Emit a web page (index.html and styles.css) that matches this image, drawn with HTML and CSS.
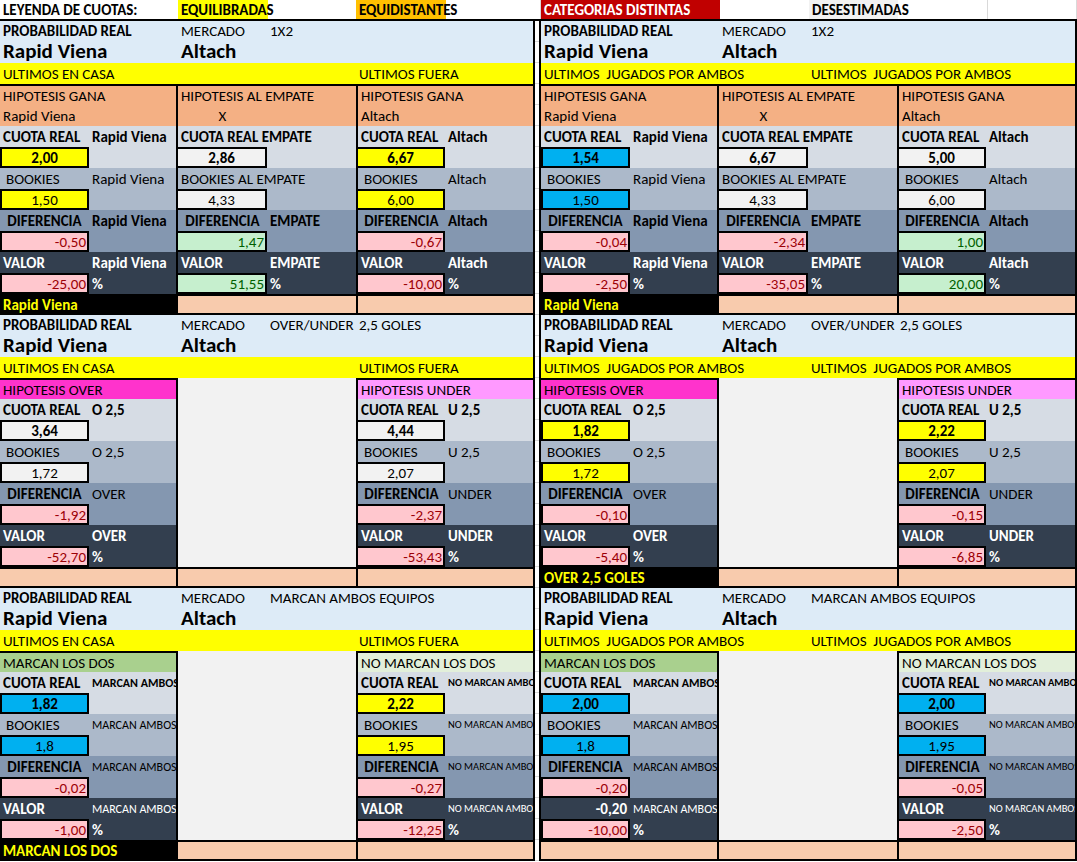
FILE: index.html
```html
<!DOCTYPE html>
<html lang="es">
<head>
<meta charset="utf-8">
<title>Leyenda de cuotas</title>
<link rel="stylesheet" href="styles.css">
</head>
<body>
<div class="legend">
  <span class="lg w178 b">LEYENDA DE CUOTAS:</span>
  <span class="lg w90 b ylw">EQUILIBRADAS</span>
  <span class="lg w88"></span>
  <span class="lg w90 b org">EQUIDISTANTES</span>
  <span class="lg w95 gl"></span>
  <span class="lg w179 b red">CATEGORIAS DISTINTAS</span>
  <span class="lg w89"></span>
  <span class="lg w89 b lgr">DESESTIMADAS</span>
  <span class="lg w90 gl"></span>
  <span class="lg fl gl"></span>
</div>

<div class="sheet">
  <!-- LEFT HALF -->
  <div class="half left">
    <!-- BLOCK 1X2 -->
    <div class="hdr">
      <div class="hrow"><span class="w178 b">PROBABILIDAD REAL</span><span class="w89">MERCADO</span><span class="w89">1X2</span></div>
      <div class="hrow big"><span class="w178">Rapid Viena</span><span class="w89">Altach</span></div>
    </div>
    <div class="row yel"><span class="w356">ULTIMOS EN CASA</span><span class="fl">ULTIMOS FUERA</span></div>
    <div class="grps">
      <div class="grp g1">
        <div class="row hip tb"><span class="fl">HIPOTESIS GANA</span></div>
        <div class="row hip"><span class="fl">Rapid Viena</span></div>
        <div class="row l1 b"><span class="a">CUOTA REAL</span><span class="z">Rapid Viena</span></div>
        <div class="row l1"><span class="a box yb b">2,00</span><span class="z"></span></div>
        <div class="row l2"><span class="a sp">BOOKIES</span><span class="z">Rapid Viena</span></div>
        <div class="row l2"><span class="a box yb">1,50</span><span class="z"></span></div>
        <div class="row l3 b"><span class="a ctr">DIFERENCIA</span><span class="z">Rapid Viena</span></div>
        <div class="row l3"><span class="a box neg">-0,50</span><span class="z"></span></div>
        <div class="row l4 b"><span class="a">VALOR</span><span class="z">Rapid Viena</span></div>
        <div class="row l4"><span class="a box neg">-25,00</span><span class="z b">%</span></div>
        <div class="row res blk"><span class="fl">Rapid Viena</span></div>
      </div>
      <div class="grp g2">
        <div class="row hip tb"><span class="fl">HIPOTESIS AL EMPATE</span></div>
        <div class="row hip"><span class="a ctr">X</span><span class="z"></span></div>
        <div class="row l1 b"><span class="fl">CUOTA REAL EMPATE</span></div>
        <div class="row l1"><span class="a box wb b nl">2,86</span><span class="z"></span></div>
        <div class="row l2"><span class="fl">BOOKIES AL EMPATE</span></div>
        <div class="row l2"><span class="a box wb nl">4,33</span><span class="z"></span></div>
        <div class="row l3 b"><span class="a ctr">DIFERENCIA</span><span class="z">EMPATE</span></div>
        <div class="row l3"><span class="a box pos nl">1,47</span><span class="z"></span></div>
        <div class="row l4 b"><span class="a">VALOR</span><span class="z">EMPATE</span></div>
        <div class="row l4"><span class="a box pos nl">51,55</span><span class="z b">%</span></div>
        <div class="row res"><span class="fl"></span></div>
      </div>
      <div class="grp g3">
        <div class="row hip tb"><span class="fl">HIPOTESIS GANA</span></div>
        <div class="row hip"><span class="fl">Altach</span></div>
        <div class="row l1 b"><span class="a">CUOTA REAL</span><span class="z">Altach</span></div>
        <div class="row l1"><span class="a box yb b nl">6,67</span><span class="z"></span></div>
        <div class="row l2"><span class="a sp">BOOKIES</span><span class="z">Altach</span></div>
        <div class="row l2"><span class="a box yb nl">6,00</span><span class="z"></span></div>
        <div class="row l3 b"><span class="a ctr">DIFERENCIA</span><span class="z">Altach</span></div>
        <div class="row l3"><span class="a box neg nl">-0,67</span><span class="z"></span></div>
        <div class="row l4 b"><span class="a">VALOR</span><span class="z">Altach</span></div>
        <div class="row l4"><span class="a box neg nl">-10,00</span><span class="z b">%</span></div>
        <div class="row res"><span class="fl"></span></div>
      </div>
    </div>

    <!-- BLOCK OVER/UNDER -->
    <div class="hdr">
      <div class="hrow"><span class="w178 b">PROBABILIDAD REAL</span><span class="w89">MERCADO</span><span class="w89">OVER/UNDER</span><span class="w89">2,5 GOLES</span></div>
      <div class="hrow big"><span class="w178">Rapid Viena</span><span class="w89">Altach</span></div>
    </div>
    <div class="row yel"><span class="w356">ULTIMOS EN CASA</span><span class="fl">ULTIMOS FUERA</span></div>
    <div class="grps">
      <div class="grp g1">
        <div class="row ov tb"><span class="fl">HIPOTESIS OVER</span></div>
        <div class="row l1 b"><span class="a">CUOTA REAL</span><span class="z">O 2,5</span></div>
        <div class="row l1"><span class="a box wb b">3,64</span><span class="z"></span></div>
        <div class="row l2"><span class="a sp">BOOKIES</span><span class="z">O 2,5</span></div>
        <div class="row l2"><span class="a box wb">1,72</span><span class="z"></span></div>
        <div class="row l3"><span class="a ctr b">DIFERENCIA</span><span class="z">OVER</span></div>
        <div class="row l3"><span class="a box neg">-1,92</span><span class="z"></span></div>
        <div class="row l4 b"><span class="a">VALOR</span><span class="z">OVER</span></div>
        <div class="row l4"><span class="a box neg">-52,70</span><span class="z b">%</span></div>
        <div class="row res"><span class="fl"></span></div>
      </div>
      <div class="grp g2">
        <div class="gray"></div>
        <div class="row res"><span class="fl"></span></div>
      </div>
      <div class="grp g3">
        <div class="row un tb"><span class="fl">HIPOTESIS UNDER</span></div>
        <div class="row l1 b"><span class="a">CUOTA REAL</span><span class="z">U 2,5</span></div>
        <div class="row l1"><span class="a box wb b nl">4,44</span><span class="z"></span></div>
        <div class="row l2"><span class="a sp">BOOKIES</span><span class="z">U 2,5</span></div>
        <div class="row l2"><span class="a box wb nl">2,07</span><span class="z"></span></div>
        <div class="row l3"><span class="a ctr b">DIFERENCIA</span><span class="z">UNDER</span></div>
        <div class="row l3"><span class="a box neg nl">-2,37</span><span class="z"></span></div>
        <div class="row l4 b"><span class="a">VALOR</span><span class="z">UNDER</span></div>
        <div class="row l4"><span class="a box neg nl">-53,43</span><span class="z b">%</span></div>
        <div class="row res"><span class="fl"></span></div>
      </div>
    </div>

    <!-- BLOCK MARCAN AMBOS -->
    <div class="hdr">
      <div class="hrow"><span class="w178 b">PROBABILIDAD REAL</span><span class="w89">MERCADO</span><span class="fl">MARCAN AMBOS EQUIPOS</span></div>
      <div class="hrow big"><span class="w178">Rapid Viena</span><span class="w89">Altach</span></div>
    </div>
    <div class="row yel"><span class="w356">ULTIMOS EN CASA</span><span class="fl">ULTIMOS FUERA</span></div>
    <div class="grps">
      <div class="grp g1">
        <div class="row mg tb"><span class="fl">MARCAN LOS DOS</span></div>
        <div class="row l1 b"><span class="a">CUOTA REAL</span><span class="z sm">MARCAN AMBOS</span></div>
        <div class="row l1"><span class="a box bb b">1,82</span><span class="z"></span></div>
        <div class="row l2"><span class="a sp">BOOKIES</span><span class="z sm">MARCAN AMBOS</span></div>
        <div class="row l2"><span class="a box bb">1,8</span><span class="z"></span></div>
        <div class="row l3"><span class="a ctr b">DIFERENCIA</span><span class="z sm">MARCAN AMBOS</span></div>
        <div class="row l3"><span class="a box neg">-0,02</span><span class="z"></span></div>
        <div class="row l4"><span class="a b">VALOR</span><span class="z sm">MARCAN AMBOS</span></div>
        <div class="row l4"><span class="a box neg">-1,00</span><span class="z b">%</span></div>
        <div class="row res blk"><span class="fl">MARCAN LOS DOS</span></div>
      </div>
      <div class="grp g2">
        <div class="gray"></div>
        <div class="row res"><span class="fl"></span></div>
      </div>
      <div class="grp g3">
        <div class="row nm tb"><span class="fl">NO MARCAN LOS DOS</span></div>
        <div class="row l1 b"><span class="a">CUOTA REAL</span><span class="z xs">NO MARCAN AMBOS</span></div>
        <div class="row l1"><span class="a box yb b nl">2,22</span><span class="z"></span></div>
        <div class="row l2"><span class="a sp">BOOKIES</span><span class="z xs">NO MARCAN AMBOS</span></div>
        <div class="row l2"><span class="a box yb nl">1,95</span><span class="z"></span></div>
        <div class="row l3"><span class="a ctr b">DIFERENCIA</span><span class="z xs">NO MARCAN AMBOS</span></div>
        <div class="row l3"><span class="a box neg nl">-0,27</span><span class="z"></span></div>
        <div class="row l4"><span class="a b">VALOR</span><span class="z xs">NO MARCAN AMBOS</span></div>
        <div class="row l4"><span class="a box neg nl">-12,25</span><span class="z b">%</span></div>
        <div class="row res"><span class="fl"></span></div>
      </div>
    </div>
  </div>

  <div class="sep"></div>

  <!-- RIGHT HALF -->
  <div class="half right">
    <div class="hdr">
      <div class="hrow"><span class="w178 b">PROBABILIDAD REAL</span><span class="w89">MERCADO</span><span class="w89">1X2</span></div>
      <div class="hrow big"><span class="w178">Rapid Viena</span><span class="w89">Altach</span></div>
    </div>
    <div class="row yel"><span class="w267">ULTIMOS &nbsp;JUGADOS POR AMBOS</span><span class="fl">ULTIMOS &nbsp;JUGADOS POR AMBOS</span></div>
    <div class="grps">
      <div class="grp g1">
        <div class="row hip tb"><span class="fl">HIPOTESIS GANA</span></div>
        <div class="row hip"><span class="fl">Rapid Viena</span></div>
        <div class="row l1 b"><span class="a">CUOTA REAL</span><span class="z">Rapid Viena</span></div>
        <div class="row l1"><span class="a box bb b">1,54</span><span class="z"></span></div>
        <div class="row l2"><span class="a sp">BOOKIES</span><span class="z">Rapid Viena</span></div>
        <div class="row l2"><span class="a box bb">1,50</span><span class="z"></span></div>
        <div class="row l3 b"><span class="a ctr">DIFERENCIA</span><span class="z">Rapid Viena</span></div>
        <div class="row l3"><span class="a box neg">-0,04</span><span class="z"></span></div>
        <div class="row l4 b"><span class="a">VALOR</span><span class="z">Rapid Viena</span></div>
        <div class="row l4"><span class="a box neg">-2,50</span><span class="z b">%</span></div>
        <div class="row res blk"><span class="fl">Rapid Viena</span></div>
      </div>
      <div class="grp g2">
        <div class="row hip tb"><span class="fl">HIPOTESIS AL EMPATE</span></div>
        <div class="row hip"><span class="a ctr">X</span><span class="z"></span></div>
        <div class="row l1 b"><span class="fl">CUOTA REAL EMPATE</span></div>
        <div class="row l1"><span class="a box wb b nl">6,67</span><span class="z"></span></div>
        <div class="row l2"><span class="fl">BOOKIES AL EMPATE</span></div>
        <div class="row l2"><span class="a box wb nl">4,33</span><span class="z"></span></div>
        <div class="row l3 b"><span class="a ctr">DIFERENCIA</span><span class="z">EMPATE</span></div>
        <div class="row l3"><span class="a box neg nl">-2,34</span><span class="z"></span></div>
        <div class="row l4 b"><span class="a">VALOR</span><span class="z">EMPATE</span></div>
        <div class="row l4"><span class="a box neg nl">-35,05</span><span class="z b">%</span></div>
        <div class="row res"><span class="fl"></span></div>
      </div>
      <div class="grp g3">
        <div class="row hip tb"><span class="fl">HIPOTESIS GANA</span></div>
        <div class="row hip"><span class="fl">Altach</span></div>
        <div class="row l1 b"><span class="a">CUOTA REAL</span><span class="z">Altach</span></div>
        <div class="row l1"><span class="a box wb b nl">5,00</span><span class="z"></span></div>
        <div class="row l2"><span class="a sp">BOOKIES</span><span class="z">Altach</span></div>
        <div class="row l2"><span class="a box wb nl">6,00</span><span class="z"></span></div>
        <div class="row l3 b"><span class="a ctr">DIFERENCIA</span><span class="z">Altach</span></div>
        <div class="row l3"><span class="a box pos nl">1,00</span><span class="z"></span></div>
        <div class="row l4 b"><span class="a">VALOR</span><span class="z">Altach</span></div>
        <div class="row l4"><span class="a box pos nl">20,00</span><span class="z b">%</span></div>
        <div class="row res"><span class="fl"></span></div>
      </div>
    </div>

    <div class="hdr">
      <div class="hrow"><span class="w178 b">PROBABILIDAD REAL</span><span class="w89">MERCADO</span><span class="w89">OVER/UNDER</span><span class="w89">2,5 GOLES</span></div>
      <div class="hrow big"><span class="w178">Rapid Viena</span><span class="w89">Altach</span></div>
    </div>
    <div class="row yel"><span class="w267">ULTIMOS &nbsp;JUGADOS POR AMBOS</span><span class="fl">ULTIMOS &nbsp;JUGADOS POR AMBOS</span></div>
    <div class="grps">
      <div class="grp g1">
        <div class="row ov tb"><span class="fl">HIPOTESIS OVER</span></div>
        <div class="row l1 b"><span class="a">CUOTA REAL</span><span class="z">O 2,5</span></div>
        <div class="row l1"><span class="a box yb b">1,82</span><span class="z"></span></div>
        <div class="row l2"><span class="a sp">BOOKIES</span><span class="z">O 2,5</span></div>
        <div class="row l2"><span class="a box yb">1,72</span><span class="z"></span></div>
        <div class="row l3"><span class="a ctr b">DIFERENCIA</span><span class="z">OVER</span></div>
        <div class="row l3"><span class="a box neg">-0,10</span><span class="z"></span></div>
        <div class="row l4 b"><span class="a">VALOR</span><span class="z">OVER</span></div>
        <div class="row l4"><span class="a box neg">-5,40</span><span class="z b">%</span></div>
        <div class="row res blk"><span class="fl">OVER 2,5 GOLES</span></div>
      </div>
      <div class="grp g2">
        <div class="gray"></div>
        <div class="row res"><span class="fl"></span></div>
      </div>
      <div class="grp g3">
        <div class="row un tb"><span class="fl">HIPOTESIS UNDER</span></div>
        <div class="row l1 b"><span class="a">CUOTA REAL</span><span class="z">U 2,5</span></div>
        <div class="row l1"><span class="a box yb b nl">2,22</span><span class="z"></span></div>
        <div class="row l2"><span class="a sp">BOOKIES</span><span class="z">U 2,5</span></div>
        <div class="row l2"><span class="a box yb nl">2,07</span><span class="z"></span></div>
        <div class="row l3"><span class="a ctr b">DIFERENCIA</span><span class="z">UNDER</span></div>
        <div class="row l3"><span class="a box neg nl">-0,15</span><span class="z"></span></div>
        <div class="row l4 b"><span class="a">VALOR</span><span class="z">UNDER</span></div>
        <div class="row l4"><span class="a box neg nl">-6,85</span><span class="z b">%</span></div>
        <div class="row res"><span class="fl"></span></div>
      </div>
    </div>

    <div class="hdr">
      <div class="hrow"><span class="w178 b">PROBABILIDAD REAL</span><span class="w89">MERCADO</span><span class="fl">MARCAN AMBOS EQUIPOS</span></div>
      <div class="hrow big"><span class="w178">Rapid Viena</span><span class="w89">Altach</span></div>
    </div>
    <div class="row yel"><span class="w267">ULTIMOS &nbsp;JUGADOS POR AMBOS</span><span class="fl">ULTIMOS &nbsp;JUGADOS POR AMBOS</span></div>
    <div class="grps">
      <div class="grp g1">
        <div class="row mg tb"><span class="fl">MARCAN LOS DOS</span></div>
        <div class="row l1 b"><span class="a">CUOTA REAL</span><span class="z sm">MARCAN AMBOS</span></div>
        <div class="row l1"><span class="a box bb b">2,00</span><span class="z"></span></div>
        <div class="row l2"><span class="a sp">BOOKIES</span><span class="z sm">MARCAN AMBOS</span></div>
        <div class="row l2"><span class="a box bb">1,8</span><span class="z"></span></div>
        <div class="row l3"><span class="a ctr b">DIFERENCIA</span><span class="z sm">MARCAN AMBOS</span></div>
        <div class="row l3"><span class="a box neg">-0,20</span><span class="z"></span></div>
        <div class="row l4"><span class="a b rt">-0,20</span><span class="z sm">MARCAN AMBOS</span></div>
        <div class="row l4"><span class="a box neg">-10,00</span><span class="z b">%</span></div>
        <div class="row res"><span class="fl"></span></div>
      </div>
      <div class="grp g2">
        <div class="gray"></div>
        <div class="row res"><span class="fl"></span></div>
      </div>
      <div class="grp g3">
        <div class="row nm tb"><span class="fl">NO MARCAN LOS DOS</span></div>
        <div class="row l1 b"><span class="a">CUOTA REAL</span><span class="z xs">NO MARCAN AMBOS</span></div>
        <div class="row l1"><span class="a box bb b nl">2,00</span><span class="z"></span></div>
        <div class="row l2"><span class="a sp">BOOKIES</span><span class="z xs">NO MARCAN AMBOS</span></div>
        <div class="row l2"><span class="a box bb nl">1,95</span><span class="z"></span></div>
        <div class="row l3"><span class="a ctr b">DIFERENCIA</span><span class="z xs">NO MARCAN AMBOS</span></div>
        <div class="row l3"><span class="a box neg nl">-0,05</span><span class="z"></span></div>
        <div class="row l4"><span class="a b">VALOR</span><span class="z xs">NO MARCAN AMBOS</span></div>
        <div class="row l4"><span class="a box neg nl">-2,50</span><span class="z b">%</span></div>
        <div class="row res"><span class="fl"></span></div>
      </div>
    </div>
  </div>
</div>
</body>
</html>
```

FILE: styles.css
```css
* { box-sizing: border-box; }

body {
  margin: 0;
  width: 1077px;
  height: 862px;
  overflow: hidden;
  background: #ffffff;
  color: #000000;
  font-family: Carlito, Lato, "Liberation Sans", sans-serif;
  font-size: 15px;
}

.b { font-weight: 700; }

/* legend row */
.legend {
  display: flex;
  height: 21px;
  border-bottom: 2px solid #000;
  white-space: nowrap;
  line-height: 21px;
}
.lg { display: block; flex: none; padding-left: 3px; overflow: visible; }
.w178 { width: 178px; }
.w179 { width: 179px; }
.w90 { width: 90px; }
.w88 { width: 88px; }
.w89 { width: 89px; }
.w95 { width: 95px; }
.w267 { width: 267px; }
.w356 { width: 356px; }
.fl { flex: 1 1 0; min-width: 0; }
.ylw { background: #ffff00; }
.org { background: #ffc000; }
.red { background: #c00000; color: #ffffff; }
.lgr { background: #f2f2f2; }
.gl { border-right: 1px solid #d9d9d9; }

/* sheet */
.sheet { display: flex; }
.half { display: flex; flex-direction: column; flex: none; }
.half.left { width: 535px; border-right: 2px solid #000; }
.half.right { width: 538px; border-left: 2px solid #000; border-right: 2px solid #000; }
.sep {
  flex: none;
  width: 4px;
  background: repeating-linear-gradient(to bottom, #ffffff 0 20px, #d9d9d9 20px 21px);
}

/* header block */
.hdr { background: #ddebf7; }
.hrow {
  display: flex;
  height: 21px;
  line-height: 21px;
  white-space: nowrap;
}
.hrow > span { display: block; flex: none; padding-left: 3px; overflow: visible; }
.hrow > span.fl { flex: 1 1 0; }
.hrow.big { font-size: 21px; font-weight: 700; line-height: 19px; }

/* rows */
.row {
  display: flex;
  height: 21px;
  line-height: 22px;
  white-space: nowrap;
}
.row > span { display: block; overflow: hidden; padding-left: 3px; }
.row > .a { flex: none; width: 89px; }
.row > .z { flex: 1 1 0; min-width: 0; }
.g3 .row > .a { width: 87px; }
.sp { padding-left: 6px !important; }
.ctr { text-align: center; padding-left: 0 !important; }
.rt { text-align: right; padding-right: 3px; color: #ffffff; }

.yel { background: #ffff00; }
.hip { background: #f4b084; }
.ov { background: #ff33cc; }
.un { background: #ff99ff; }
.mg { background: #a9d08e; }
.nm { background: #e2efda; }
.l1 { background: #d6dce4; }
.l2 { background: #acb9ca; }
.l3 { background: #8497b0; }
.l4 { background: #333f4f; color: #ffffff; }
.sm { font-size: 12px; }
.xs { font-size: 10.5px; }

.tb { border-top: 2px solid #000; line-height: 20px; }

.box {
  border: 2px solid #000;
  line-height: 18px;
  text-align: center;
  padding-left: 0 !important;
}
.nl { border-left: 0; }
.yb { background: #ffff00; }
.wb { background: #f2f2f2; }
.bb { background: #00b0f0; }
.neg { background: #ffc7ce; color: #9c0006; text-align: right; padding-right: 1px; }
.pos { background: #c6efce; color: #006100; text-align: right; padding-right: 1px; }

/* groups */
.grps { display: flex; }
.grp { display: flex; flex-direction: column; min-width: 0; }
.g1 { flex: none; width: 178px; border-right: 2px solid #000; }
.g2 { flex: none; width: 178px; }
.g3 { flex: 1 1 0; border-left: 2px solid #000; }
.gray { height: 189px; background: #f2f2f2; }

.res {
  background: #f8cbad;
  border-top: 2px solid #000;
  border-bottom: 2px solid #000;
  line-height: 18px;
}
.res.blk { background: #000000; color: #ffff00; font-weight: 700; }
```
